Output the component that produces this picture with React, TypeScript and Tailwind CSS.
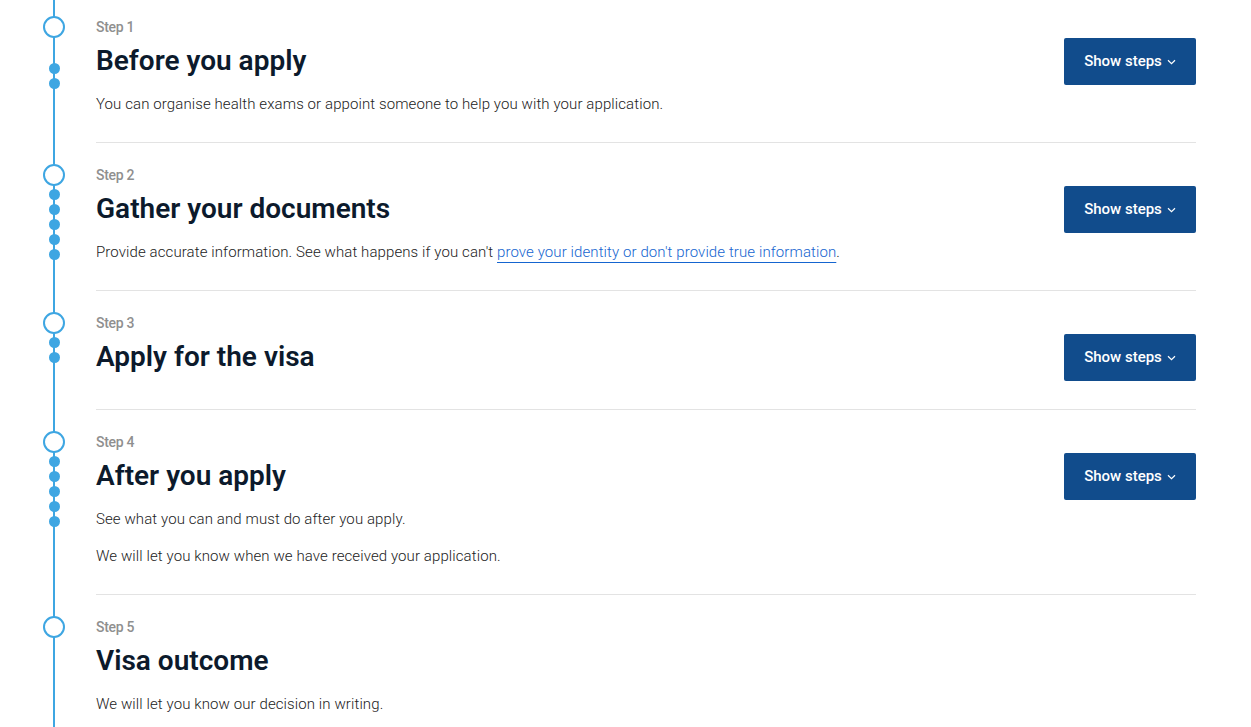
import React from "react";

type Step = {
  n: number;
  title: string;
  dots: number;
  dotGap: string;
  first?: boolean;
  body: React.ReactNode[];
};

const steps: Step[] = [
  {
    n: 1,
    title: "Before you apply",
    dots: 2,
    dotGap: "mt-[25px]",
    first: true,
    body: ["You can organise health exams or appoint someone to help you with your application."],
  },
  {
    n: 2,
    title: "Gather your documents",
    dots: 5,
    dotGap: "mt-[3px]",
    body: [
      <>
        Provide accurate information. See what happens if you can't{" "}
        <a href="#" className="text-[#1565d0] underline decoration-[#1565d0] underline-offset-[5px]">
          prove your identity or don't provide true information
        </a>
        .
      </>,
    ],
  },
  { n: 3, title: "Apply for the visa", dots: 2, dotGap: "mt-[3px]", body: [] },
  {
    n: 4,
    title: "After you apply",
    dots: 5,
    dotGap: "mt-[3px]",
    body: [
      "See what you can and must do after you apply.",
      "We will let you know when we have received your application.",
    ],
  },
  {
    n: 5,
    title: "Visa outcome",
    dots: 0,
    dotGap: "",
    body: ["We will let you know our decision in writing."],
  },
];

function Chevron() {
  return (
    <svg width="9" height="6" viewBox="0 0 9 6" className="ml-[5px] mt-[1px]">
      <path d="M1 1.2 L4.5 4.6 L8 1.2" fill="none" stroke="white" strokeWidth="1.2" />
    </svg>
  );
}

function StepRow({ step }: { step: Step }) {
  const pt = step.first ? "pt-[16px]" : "pt-[21px]";
  return (
    <div className="flex pl-[43px] pr-[55px]">
      <div className={`relative w-[22px] shrink-0 flex flex-col items-center ${pt}`}>
        <div className="absolute left-[10px] top-0 bottom-0 w-[2px] bg-[#3ea6e2]" />
        <div className="relative w-[22px] h-[22px] rounded-full border-2 border-[#3ea6e2] bg-white" />
        <div className={`relative flex flex-col gap-[4px] ${step.dotGap}`}>
          {Array.from({ length: step.dots }).map((_, i) => (
            <div key={i} className="w-[11px] h-[11px] rounded-full bg-[#3ea6e2]" />
          ))}
        </div>
      </div>
      <div
        className={`ml-[31px] flex-1 flex justify-between ${pt} pb-[27px] ${
          step.n < 5 ? "border-b border-[#e3e3e3]" : ""
        }`}
      >
        <div>
          <div className="text-[14px] leading-[22px] font-medium text-[#8f8f8f] tracking-[-0.3px]">
            Step {step.n}
          </div>
          <h2 className="mt-[5px] text-[28px] leading-[36px] font-semibold text-[#0c1a2c]">
            {step.title}
          </h2>
          {step.body.length > 0 && (
            <div className="mt-[14px] flex flex-col gap-[15px]">
              {step.body.map((b, i) => (
                <p key={i} className="text-[15px] leading-[22px] font-light tracking-[0.1px] text-[#222]">
                  {b}
                </p>
              ))}
            </div>
          )}
        </div>
        {step.n < 5 && (
          <div className="shrink-0">
            <button className="mt-[22px] mb-[1px] h-[47px] w-[132px] flex items-center justify-center rounded-[2px] bg-[#114c8c] text-white text-[15px] font-medium">
              Show steps
              <Chevron />
            </button>
          </div>
        )}
      </div>
    </div>
  );
}

export default function App() {
  return (
    <div className="min-h-screen bg-white font-['Roboto',_'Liberation_Sans',_sans-serif] antialiased">
      {steps.map((s) => (
        <StepRow key={s.n} step={s} />
      ))}
    </div>
  );
}
